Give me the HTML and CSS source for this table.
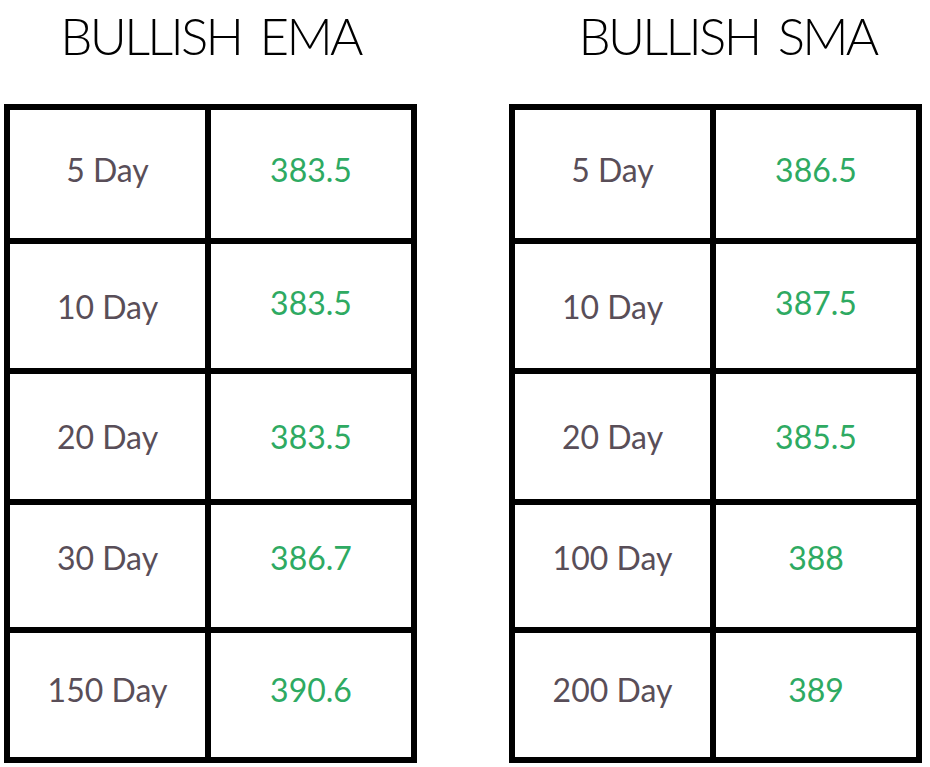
FILE: index.html
```
<!DOCTYPE html>
<html lang="en">
<head>
<meta charset="utf-8">
<title>Bullish EMA / SMA</title>
<link rel="stylesheet" href="styles.css">
</head>
<body>
<main class="page">
  <section class="panel panel-ema">
    <h1 class="title">BULLISH EMA</h1>
    <div class="grid">
      <div class="cell label">5 Day</div><div class="cell value">383.5</div>
      <div class="cell label">10 Day</div><div class="cell value">383.5</div>
      <div class="cell label">20 Day</div><div class="cell value">383.5</div>
      <div class="cell label">30 Day</div><div class="cell value">386.7</div>
      <div class="cell label">150 Day</div><div class="cell value">390.6</div>
    </div>
  </section>
  <section class="panel panel-sma">
    <h1 class="title title-shift">BULLISH SMA</h1>
    <div class="grid">
      <div class="cell label">5 Day</div><div class="cell value">386.5</div>
      <div class="cell label">10 Day</div><div class="cell value">387.5</div>
      <div class="cell label">20 Day</div><div class="cell value">385.5</div>
      <div class="cell label">100 Day</div><div class="cell value">388</div>
      <div class="cell label">200 Day</div><div class="cell value">389</div>
    </div>
  </section>
</main>
</body>
</html>
```
FILE: styles.css
```
html, body {
  margin: 0;
  padding: 0;
  background: #fff;
}
.page {
  display: flex;
  gap: 92px;
  padding-left: 4px;
}
.panel {
  display: flex;
  flex-direction: column;
  width: 413px;
}
.title {
  margin: 0 0 33px 0;
  height: 71px;
  line-height: 71px;
  font-family: Lato, "Liberation Sans", sans-serif;
  font-weight: 300;
  font-size: 51px;
  letter-spacing: -2.7px;
  word-spacing: 7px;
  color: #000;
  text-align: center;
  white-space: nowrap;
}
.title-shift {
  padding-left: 24px;
}
.grid {
  display: grid;
  grid-template-columns: 195px 200px;
  grid-template-rows: 128px 124px 125px 122px 124px;
  gap: 6px;
  padding: 6px;
  background: #000;
}
.cell {
  background: #fff;
  display: flex;
  align-items: center;
  justify-content: center;
  font-family: Lato, "Liberation Sans", sans-serif;
  font-size: 32px;
}
.cell:nth-child(-n+2) {
  padding-bottom: 10px;
}
.cell:nth-child(4) {
  padding-bottom: 8px;
}
.cell:nth-child(7),
.cell:nth-child(8) {
  padding-bottom: 18px;
}
.cell:nth-child(9),
.cell:nth-child(10) {
  padding-bottom: 12px;
}
.label {
  color: #594e58;
}
.value {
  color: #2eaa62;
}
```
